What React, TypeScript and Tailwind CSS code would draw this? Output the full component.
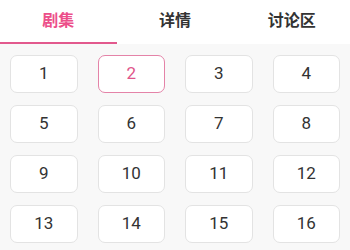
import { useState } from 'react';

const tabs = ['剧集', '详情', '讨论区'];
const episodes = Array.from({ length: 16 }, (_, i) => i + 1);

export default function App() {
  const [tab, setTab] = useState(0);
  const [current, setCurrent] = useState(2);

  return (
    <div
      className="w-[350px] h-[250px] overflow-hidden bg-[#f8f8f8]"
      style={{ fontFamily: 'Roboto, "Noto Sans CJK SC", sans-serif' }}
    >
      <div className="flex h-[44px] bg-white">
        {tabs.map((t, i) => (
          <button
            key={t}
            onClick={() => setTab(i)}
            className={`flex-1 flex items-center justify-center text-[16px] font-bold border-b-2 ${
              tab === i ? 'text-[#ec4f8a] border-[#e2598d]' : 'text-[#333] border-transparent'
            }`}
          >
            {t}
          </button>
        ))}
      </div>

      <div className="grid grid-cols-4 gap-x-[20px] gap-y-[12px] px-[10px] pt-[11px]">
        {episodes.map((n) => (
          <button
            key={n}
            onClick={() => setCurrent(n)}
            className={`h-[38px] rounded-[7px] bg-white border text-[17px] flex items-center justify-center ${
              current === n ? 'border-[#e483a8] text-[#e0558b]' : 'border-[#e3e3e3] text-[#333]'
            }`}
          >
            {n}
          </button>
        ))}
      </div>
    </div>
  );
}
